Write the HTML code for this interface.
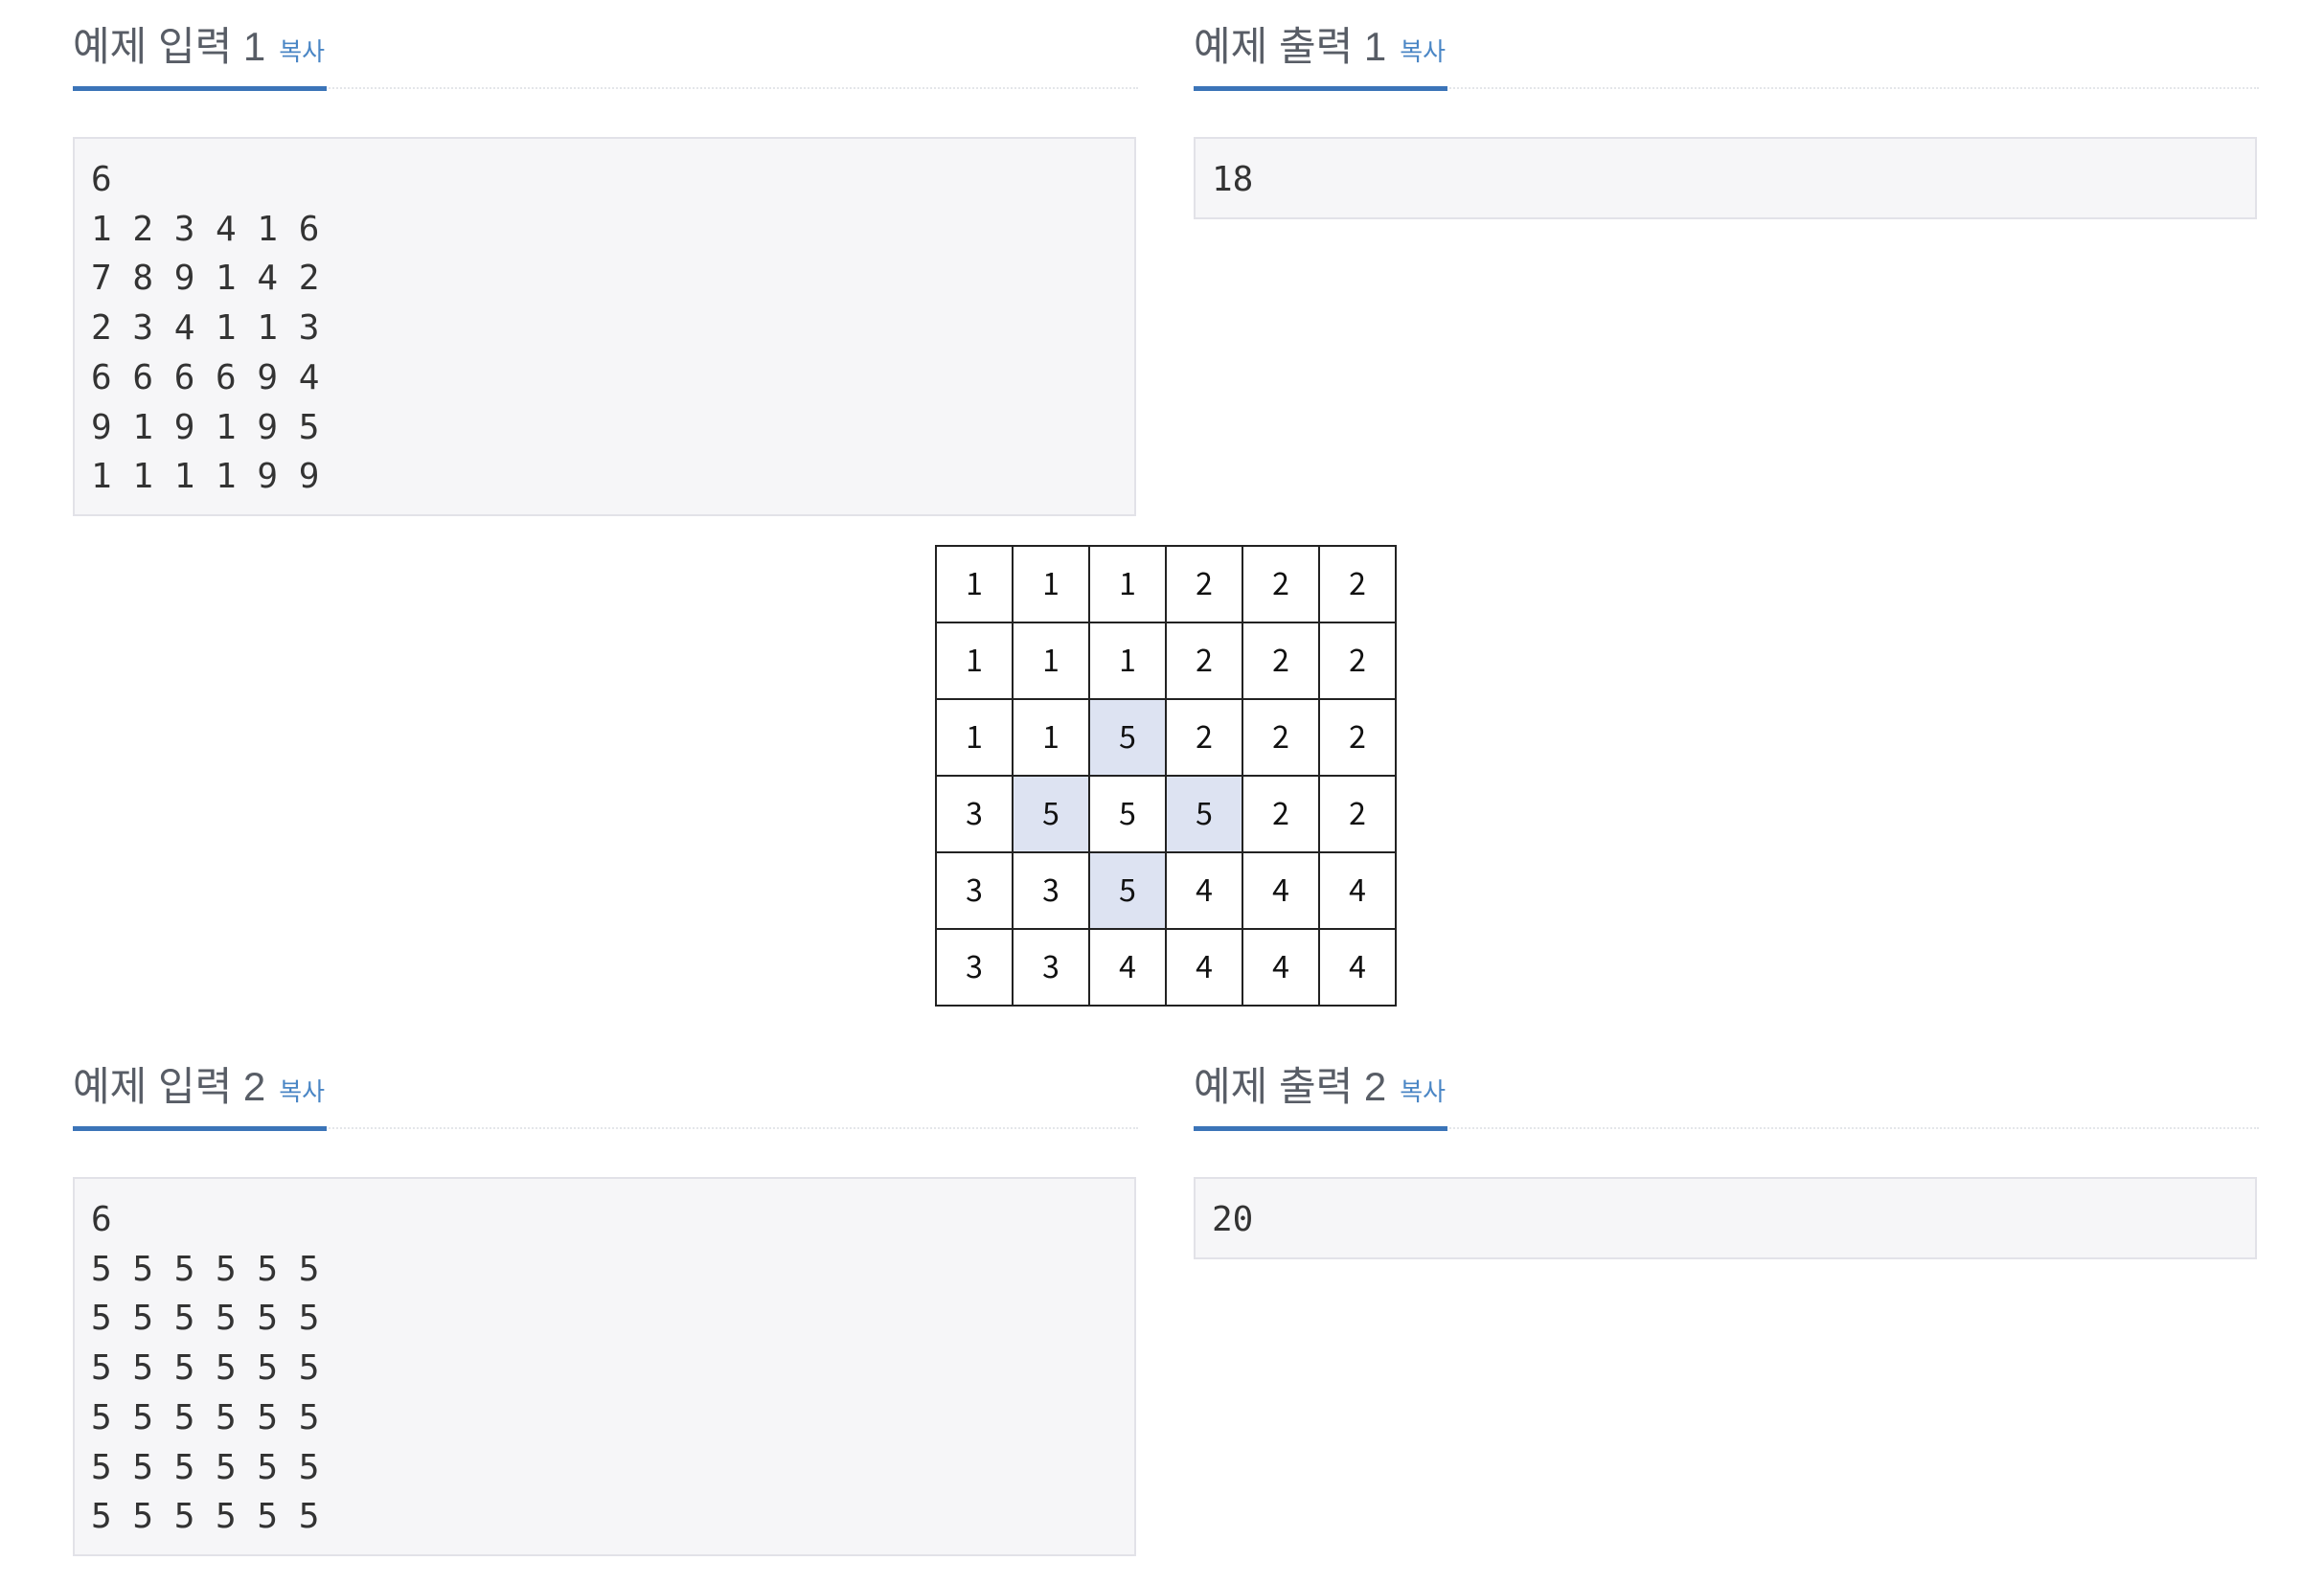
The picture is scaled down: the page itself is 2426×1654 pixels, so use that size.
<!DOCTYPE html>
<html><head><meta charset="utf-8"><style>
html,body{margin:0;padding:0;background:#fff;width:2426px;height:1654px;overflow:hidden}
.col{position:absolute;width:1112px}
.h{position:absolute;left:0;top:20px;font-family:"Liberation Sans","Noto Sans CJK KR",sans-serif;font-size:42px;color:#585d66;white-space:nowrap;line-height:58px}
.h span{font-size:26px;color:#4a86c5;margin-left:14px}
.ul{position:absolute;left:0;top:91px;width:100%;height:0;border-top:2px dotted #e4e6ea}
.ulb{position:absolute;left:0;top:90px;width:265px;height:5px;background:#3b74b8}
.box{position:absolute;left:0;top:143px;width:1110px;box-sizing:border-box;background:#f6f6f8;border:2px solid #e2e2e8;padding:17px 17px 13px;font-family:"DejaVu Sans Mono","Liberation Mono",monospace;font-size:36px;line-height:51.7px;color:#333;white-space:pre}
table{position:absolute;left:976px;top:569px;border-collapse:collapse}
td{width:78px;height:73px;border:2px solid #222;text-align:center;font-family:"Noto Sans CJK KR","Liberation Sans",sans-serif;font-size:32px;color:#111;padding:0 0 5px;box-sizing:content-box}
td.b{background:#dde3f2}
</style></head><body>
<div class="col" style="left:76px;top:0">
<div class="h">예제 입력 1<span>복사</span></div><div class="ul"></div><div class="ulb"></div>
<div class="box">6
1 2 3 4 1 6
7 8 9 1 4 2
2 3 4 1 1 3
6 6 6 6 9 4
9 1 9 1 9 5
1 1 1 1 9 9</div></div>
<div class="col" style="left:1246px;top:0">
<div class="h">예제 출력 1<span>복사</span></div><div class="ul"></div><div class="ulb"></div>
<div class="box">18</div></div>
<table>
<tr><td>1</td><td>1</td><td>1</td><td>2</td><td>2</td><td>2</td></tr>
<tr><td>1</td><td>1</td><td>1</td><td>2</td><td>2</td><td>2</td></tr>
<tr><td>1</td><td>1</td><td class="b">5</td><td>2</td><td>2</td><td>2</td></tr>
<tr><td>3</td><td class="b">5</td><td>5</td><td class="b">5</td><td>2</td><td>2</td></tr>
<tr><td>3</td><td>3</td><td class="b">5</td><td>4</td><td>4</td><td>4</td></tr>
<tr><td>3</td><td>3</td><td>4</td><td>4</td><td>4</td><td>4</td></tr>
</table>
<div class="col" style="left:76px;top:1086px">
<div class="h">예제 입력 2<span>복사</span></div><div class="ul"></div><div class="ulb"></div>
<div class="box">6
5 5 5 5 5 5
5 5 5 5 5 5
5 5 5 5 5 5
5 5 5 5 5 5
5 5 5 5 5 5
5 5 5 5 5 5</div></div>
<div class="col" style="left:1246px;top:1086px">
<div class="h">예제 출력 2<span>복사</span></div><div class="ul"></div><div class="ulb"></div>
<div class="box">20</div></div>
</body></html>
